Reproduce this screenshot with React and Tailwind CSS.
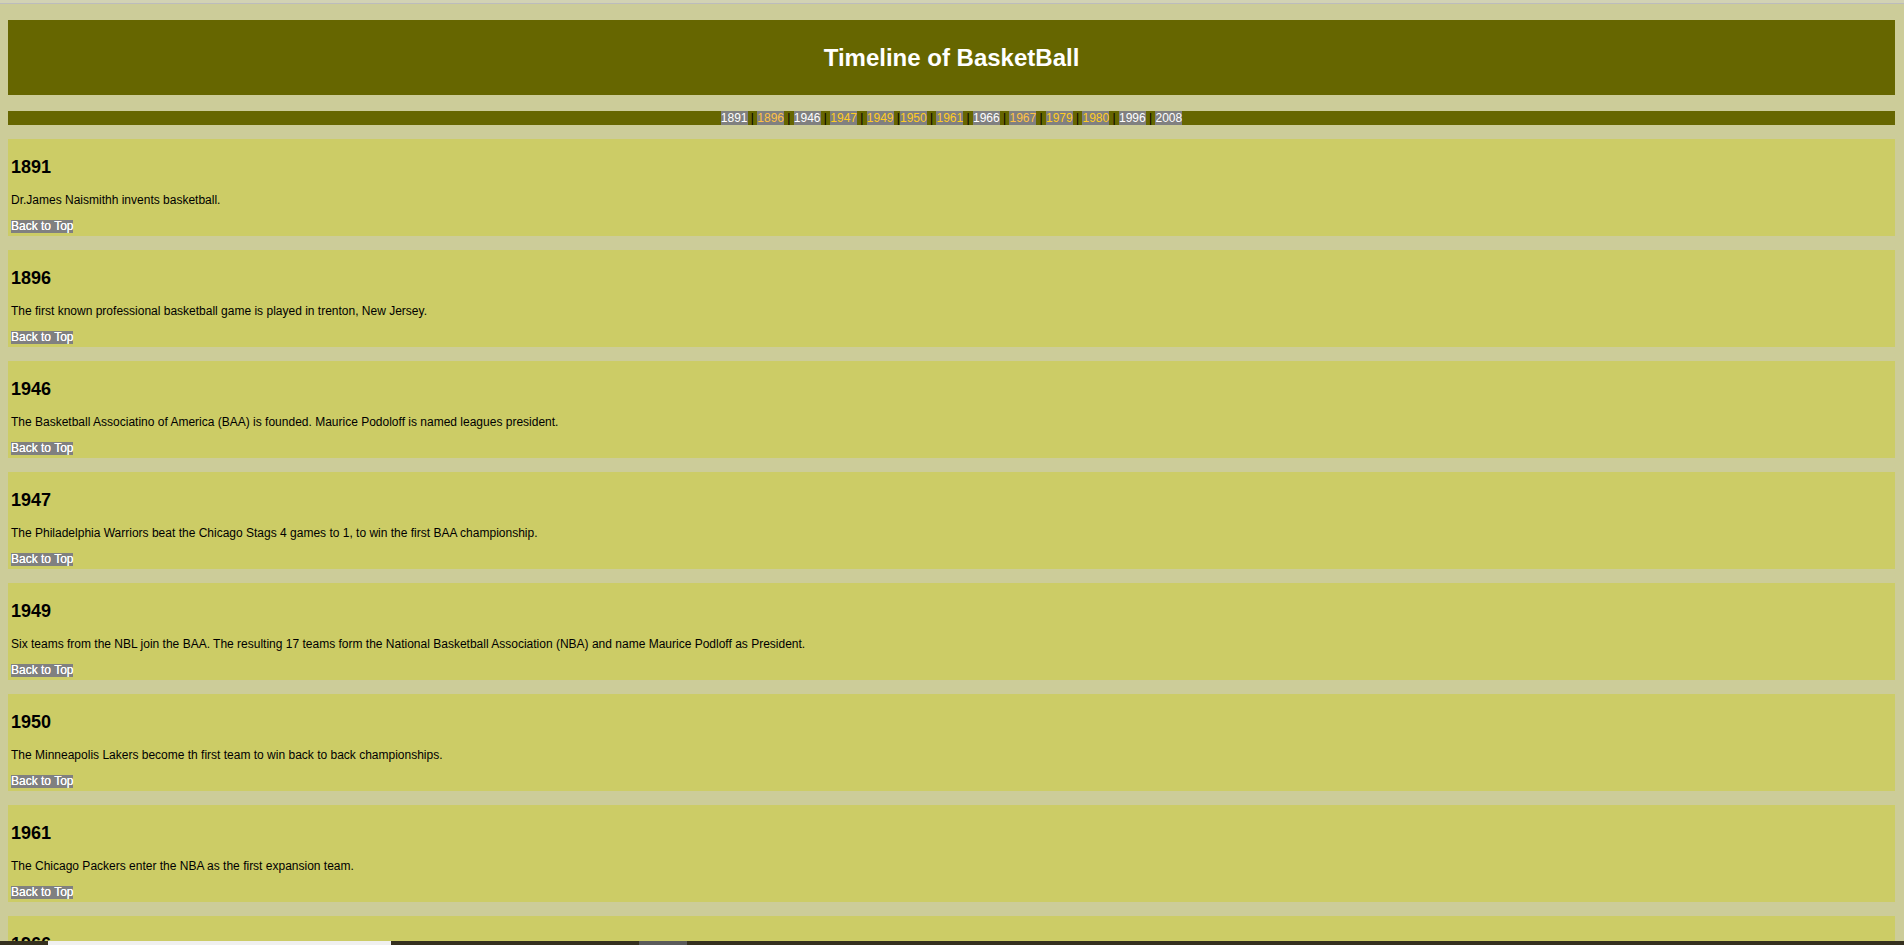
import React from "react";

const items = [
  { y: "1891", t: "Dr.James Naismithh invents basketball." },
  { y: "1896", t: "The first known professional basketball game is played in trenton, New Jersey." },
  { y: "1946", t: "The Basketball Associatino of America (BAA) is founded. Maurice Podoloff is named leagues president." },
  { y: "1947", t: "The Philadelphia Warriors beat the Chicago Stags 4 games to 1, to win the first BAA championship." },
  { y: "1949", t: "Six teams from the NBL join the BAA. The resulting 17 teams form the National Basketball Association (NBA) and name Maurice Podloff as President." },
  { y: "1950", t: "The Minneapolis Lakers become th first team to win back to back championships." },
  { y: "1961", t: "The Chicago Packers enter the NBA as the first expansion team." },
  { y: "1966", t: "The Chicago Bulls join the NBA." },
  { y: "1967", t: "The American Basketball Association (ABA) is formed." },
  { y: "1979", t: "The three-point field goal is introduced in the NBA." },
  { y: "1980", t: "The Dallas Mavericks join the NBA, bringing the league to 23 teams." },
  { y: "1996", t: "The NBA celebrates its 50th anniversary season." },
  { y: "2008", t: "The Seattle SuperSonics relocate and become the Oklahoma City Thunder." },
];

const nav = [
  { y: "1891", c: "text-white", sep: " | " },
  { y: "1896", c: "text-[#ffc244]", sep: " | " },
  { y: "1946", c: "text-white", sep: " | " },
  { y: "1947", c: "text-[#ffcc22]", sep: " | " },
  { y: "1949", c: "text-[#ffcc22]", sep: " |" },
  { y: "1950", c: "text-[#ffcc22]", sep: " | " },
  { y: "1961", c: "text-[#ffcc22]", sep: " | " },
  { y: "1966", c: "text-white", sep: " | " },
  { y: "1967", c: "text-[#ffc244]", sep: " | " },
  { y: "1979", c: "text-[#ffcc22]", sep: " | " },
  { y: "1980", c: "text-[#ffcc22]", sep: " | " },
  { y: "1996", c: "text-white", sep: " | " },
  { y: "2008", c: "text-white", sep: "" },
];

export default function App() {
  return (
    <div className="min-h-screen bg-[#cccc99] font-['Liberation_Sans',Arial,sans-serif] pb-[20px]">
      <div className="h-[3px] bg-[#d2d2b4]" />
      <div className="h-px bg-[#bcbcbc]" />
      <div className="pl-[8px] pr-[9px] pt-[16px]" id="top">
        <div className="h-[75px] bg-[#666600] flex items-center justify-center">
          <h1 className="text-white text-[24px] font-bold leading-[28px]">Timeline of BasketBall</h1>
        </div>
        <div className="mt-[16px] h-[14px] bg-[#666600] text-center text-[12px] leading-[14px] whitespace-pre text-black">
          {nav.map((n) => (
            <React.Fragment key={n.y}>
              <a href={"#y" + n.y} className={"bg-[#808080] " + n.c}>{n.y}</a>
              {n.sep}
            </React.Fragment>
          ))}
        </div>
        {items.map((it) => (
          <section
            key={it.y}
            id={"y" + it.y}
            className="mt-[14px] bg-[#cccc66] pt-[18px] pb-[3px] px-[3px] flex flex-col items-start"
          >
            <h3 className="text-[18px] font-bold leading-[21px] text-black">{it.y}</h3>
            <p className="mt-[15px] text-[12px] leading-[14px] text-black">{it.t}</p>
            <a href="#top" className="mt-[13px] bg-[#808080] text-white text-[12px] leading-[13px] [text-shadow:0_0_0.4px_#ffffff]">
              Back to Top
            </a>
          </section>
        ))}
      </div>
      <div className="fixed bottom-0 left-0 right-0 h-[4px] bg-[#35301f]">
        <div className="absolute left-[48px] w-[343px] top-0 h-[4px] bg-[#f0f0f0]" />
        <div className="absolute left-[639px] w-[48px] top-0 h-[4px] bg-[#5a5a5a]" />
      </div>
    </div>
  );
}
